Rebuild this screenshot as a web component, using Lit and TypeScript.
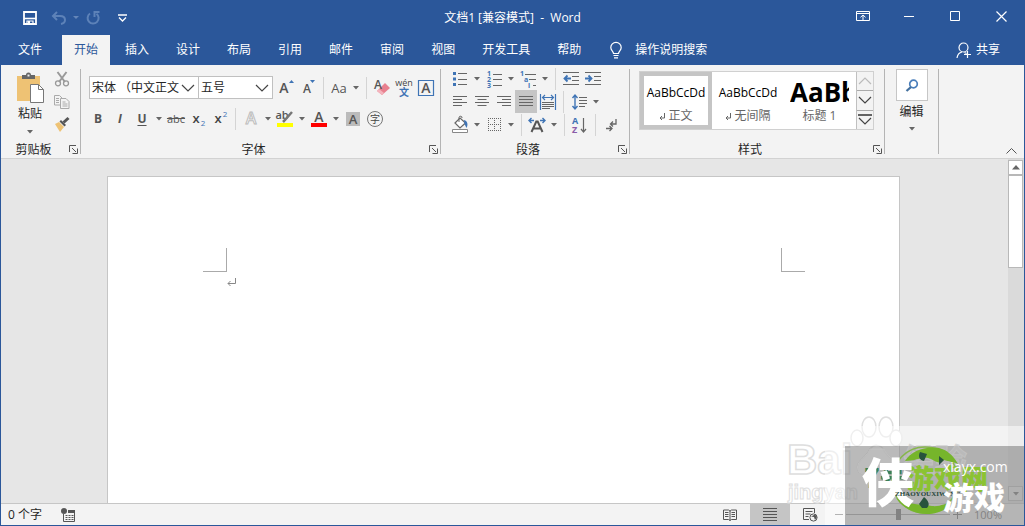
import { LitElement, html, svg, css, type TemplateResult } from "lit";
import { customElement, state } from "lit/decorators.js";
import { classMap } from "lit/directives/class-map.js";

const icon = (w: number, h: number, content: unknown) =>
  html`<svg width=${w} height=${h} viewBox="0 0 ${w} ${h}" fill="none" aria-hidden="true">${content}</svg>`;

const GREY = "#666";
const BLUE = "#3f74b5";

const caretGlyph = icon(6, 4, svg`<path d="M0 0h6L3 3.5z" fill="#666"/>`);
const chevronDown = icon(14, 8, svg`<path d="M1 1l6 6 6-6" stroke="#444" stroke-width="1.2"/>`);

const icons = {
  save: icon(14, 14, svg`<path d="M1 1h12v12H1z" stroke="#fff" stroke-width="1.8"/><path d="M1 7.500h12" stroke="#fff" stroke-width="1.6"/><path d="M4 13V10h6v3" stroke="#fff" stroke-width="1.2"/><path d="M5 10h2v3H5z" fill="#fff"/>`),
  undo: icon(16, 14, svg`<path d="M6 1L2 5l4 4M2.500 5H9c3 0 5 1.500 5 4 0 2-1.500 3.500-4 4" stroke="#5d82b8" stroke-width="2"/>`),
  redo: icon(16, 16, svg`<path d="M5 3.500a5.500 5.500 0 1 0 6.500.2" stroke="#5d82b8" stroke-width="2"/><path d="M9.500 7V2h5" stroke="#5d82b8" stroke-width="2"/>`),
  customise: icon(9, 8, svg`<path d="M0 1h9M1 3.500l3.500 3.500L8 3.500" stroke="#fff" stroke-width="1.300"/>`),
  ribbonMode: icon(14, 12, svg`<path d="M.5 1.500h13v9H.5zM.5 3.500h13M7 10V5M4.500 7.300L7 5l2.500 2.300" stroke="#fff"/>`),
  minimise: icon(10, 10, svg`<path d="M0 5.500h10" stroke="#fff"/>`),
  maximise: icon(10, 10, svg`<path d="M.5.5h9v9h-9z" stroke="#fff"/>`),
  close: icon(11, 11, svg`<path d="M.5.5l10 10M10.500.5l-10 10" stroke="#fff" stroke-width="1.200"/>`),
  bulb: icon(12, 17, svg`<path d="M3.500 11.500c0-2-2.700-3-2.700-6a5.200 5.200 0 0 1 10.400 0c0 3-2.700 4-2.700 6zM3.500 13.500h5M4 15.800h4" stroke="#fff" stroke-width="1.200"/>`),
  person: icon(16, 17, svg`<circle cx="7.500" cy="5.500" r="4.500" stroke="#fff" stroke-width="1.200"/><path d="M1 16c.5-3.500 2.500-5.500 5-6M8.500 10.500l2 1M11.500 9v7M8 12.500h7" stroke="#fff" stroke-width="1.200"/>`),
  paste: icon(29, 31, svg`<path d="M1 4h23v25H1z" fill="#eec274"/><path d="M6 3h4a2.500 2.500 0 0 1 5 0h4v4H6z" fill="#666"/><path d="M11.500 2.500h2v2h-2z" fill="#eee"/><path d="M14.500 12.500h8l5 5v13h-13z" fill="#fff" stroke="#777"/><path d="M22.500 12.500v5h5" stroke="#777"/>`),
  cut: icon(16, 16, svg`<path d="M3.500 1L11 11M12.500 1L5 11" stroke="#999" stroke-width="2"/><circle cx="4" cy="12.300" r="2.500" stroke="#999" stroke-width="1.300"/><circle cx="12" cy="12.300" r="2.500" stroke="#999" stroke-width="1.300"/>`),
  copy: icon(16, 15, svg`<path d="M.5 1.500h5l2.500 2.500v7H.5z" fill="#f3f3f3" stroke="#aaa"/><path d="M6.500 4.500h5.500l3 3v7H6.500z" fill="#f3f3f3" stroke="#aaa"/><path d="M2 4.500h3M2 6.500h3M2 8.500h3M8.500 8h3M8.500 10h5M8.500 12h5" stroke="#aaa"/>`),
  painter: icon(16, 15, svg`<path d="M1 7l4-2 5 5-4 5z" fill="#eec274"/><path d="M5.500 4.500l5 5 1.500-1.500-5-5z" fill="#555"/><path d="M9.500 5.500L14.500 1" stroke="#555" stroke-width="3"/>`),
  bullets: icon(14, 15, svg`<path d="M0 1h3v3H0zM0 6.500h3v3H0zM0 12h3v3H0z" fill="${BLUE}"/><path d="M5 2.500h9M5 8.500h9M5 13.500h9" stroke="${GREY}"/>`),
  outdent: icon(16, 13, svg`<path d="M0 .5h16M9 4.500h7M9 8.500h7M0 12.500h16" stroke="${GREY}"/><path d="M8 6.500H2M4.500 3.500l-3 3 3 3" stroke="${BLUE}" stroke-width="1.800"/>`),
  indent: icon(16, 13, svg`<path d="M0 .5h16M9 4.500h7M9 8.500h7M0 12.500h16" stroke="${GREY}"/><path d="M0 6.500h6M3.500 3.500l3 3-3 3" stroke="${BLUE}" stroke-width="1.800"/>`),
  left: icon(14, 11, svg`<path d="M0 .5h14M0 3.500h9M0 6.500h14M0 9.500h9" stroke="${GREY}"/>`),
  center: icon(14, 11, svg`<path d="M0 .5h14M2.500 3.500h9M0 6.500h14M2.500 9.500h9" stroke="${GREY}"/>`),
  right: icon(14, 11, svg`<path d="M0 .5h14M5 3.500h9M0 6.500h14M5 9.500h9" stroke="${GREY}"/>`),
  justify: icon(14, 11, svg`<path d="M0 .5h14M0 3.500h14M0 6.500h14M0 9.500h14" stroke="${GREY}"/>`),
  distribute: icon(16, 16, svg`<path d="M.5 0v16M15.500 0v16M2 3.500h12M5 1L2.500 3.500 5 6M11 1l2.500 2.500L11 6" stroke="${BLUE}" stroke-width="1.200"/><path d="M2 8.500h12M2 10.500h12M2 12.500h12M2 14.500h8" stroke="${GREY}"/>`),
  spacing: icon(15, 16, svg`<path d="M3 1v14M.5 4L3 1l2.500 3M.5 12L3 15l2.500-3" stroke="${BLUE}" stroke-width="1.400"/><path d="M7 3.500h8M7 6.500h8M7 9.500h8M7 12.500h6" stroke="${GREY}"/>`),
  shading: icon(17, 17, svg`<path d="M3 7l5-5 5.500 5L8 12z" fill="#fff" stroke="${GREY}" stroke-width="1.200"/><path d="M7 6V1.500A1.500 1.500 0 0 1 10 2" stroke="${GREY}"/><path d="M12 4c4 1 4 5 2.500 8l-2-4z" fill="${BLUE}"/><path d="M.5 13.500h15v3H.5z" fill="#fff" stroke="#888"/>`),
  borders: icon(13, 13, svg`<path d="M0 .5h13M0 6.500h13M0 12.500h13M.5 0v13M6.500 0v13M12.500 0v13" stroke="${GREY}" stroke-dasharray="1 1"/>`),
  asian: icon(18, 17, svg`<path d="M1 4.500h5M3.500 2L1 4.500 3.500 7M12 4.500h5M14.500 2L17 4.500 14.500 7" stroke="${BLUE}" stroke-width="1.400"/><path d="M3.500 16L8.300 5.500h1.400L14.500 16M5.500 12.500h7" stroke="#555" stroke-width="2"/>`),
  mark: icon(12, 14, svg`<path d="M11 1v5H6M8 3.500L5.500 6 8 8.500M1 10.500h6M4.500 8L7 10.500 4.500 13" stroke="${GREY}" stroke-width="1.300"/>`),
  search: icon(14, 13, svg`<circle cx="8.500" cy="5" r="3.800" stroke="#4a7ebb" stroke-width="1.700"/><path d="M6 8l-4.500 4" stroke="#44719f" stroke-width="2.300"/>`),
  launcher: icon(9, 9, svg`<path d="M.5 7V.5H7M3 3l4 4M8.500 3.500v5h-5" stroke="#555"/>`),
  book: icon(14, 12, svg`<path d="M7 1.500v10M.5 1h5L7 2.200 8.500 1h5v9.500h-5L7 11.500 5.500 10.500h-5z" stroke="#555"/><path d="M2 3.500h3.500M2 5.500h3.500M2 7.500h3.500M8.500 3.500H12M8.500 5.500H12M8.500 7.500H12" stroke="#555"/>`),
  printView: icon(14, 13, svg`<path d="M0 .5h14M0 3.500h14M0 6.500h14M0 9.500h14M0 12.500h14" stroke="#555"/>`),
  webView: icon(15, 14, svg`<path d="M6 11.500H.5V.5h11V5M2.500 3.500h7M2.500 6h5M2.500 8.500h3" stroke="#555"/><circle cx="10.500" cy="9.500" r="3.600" stroke="#555"/><path d="M8 8.500l3 .5 1 3 2-3-2-2.500z" fill="#555"/>`),
  macro: icon(14, 14, svg`<path d="M2.500 6v7.500h11V2.500H7" stroke="#555"/><circle cx="3" cy="3" r="3" fill="#555"/><path d="M7 2h7v3H7z" fill="#555"/><path d="M4.500 7.500h8M4.500 9.500h8M4.500 11.500h8" stroke="#555" stroke-dasharray="2 1"/>`),
  enter: icon(9, 8, svg`<path d="M8.500 0v5.500H1M3.500 3L1 5.500 3.500 8" stroke="#888"/>`),
};

@customElement("word-watermark")
class WordWatermark extends LitElement {
  static styles = css`
    :host { position: absolute; right: 0; bottom: 0; width: 240px; height: 111px; pointer-events: none; }
    .art { display: block; }
    .brand { font-family: "Liberation Sans", "Noto Sans CJK SC", sans-serif; font-weight: 700; }
    .cjk { font-family: "Noto Sans CJK SC", sans-serif; font-weight: 900; }
    .latin { font-family: "Open Sans", sans-serif; }
    .serif { font-family: "Liberation Serif", serif; }
  `;
  render() {
    return html`<svg class="art" width="240" height="111" viewBox="0 0 240 111" fill="none" aria-hidden="true">
      <g stroke="#dedede" stroke-width="1.500" fill="#fff">
        <ellipse cx="73" cy="24" rx="6" ry="8"/><ellipse cx="85" cy="13" rx="7" ry="10"/>
        <ellipse cx="102" cy="13" rx="7" ry="10"/><ellipse cx="112" cy="24" rx="6" ry="8"/>
        <path d="M75 58c-6-10 8-14 11-23 4-5 10-5 14 1 3 8 16 12 11 22-7 6-12 0-18 0s-12 5-18 0z"/>
        <text class="brand" x="3" y="60" font-size="42">Bai</text>
        <text class="brand" x="4" y="85" font-size="20" stroke-width="1">jingyan</text>
      </g>
      <path d="M41 12h199v99H41z" fill="#fff" fill-opacity=".5"/>
      <path d="M61 32h179v79H61z" fill="#000" fill-opacity=".27"/>
      <g stroke="#c9c9c9" fill="#bfbfbf" opacity=".7">
        <text class="brand" x="119" y="58" font-size="32">经验</text>
        <path d="M75 58c-6-10 8-14 11-23h14c3 8 16 13 11 23-7 6-12 0-18 0s-12 5-18 0z"/>
      </g>
      <circle cx="141" cy="66" r="33" stroke="#86b64c" stroke-width="1.500"/>
      <path d="M121 47c6-10 20-15 34-13 8 2 14 7 19 16-6-3-9-2-14-4-6 6-10-1-16-2-7-1-12 3-23 3z" fill="#76b52b"/>
      <path d="M112 84c8 6 22 6 36 8 8 1 14-3 20-4-7 11-22 14-34 11-10-3-17-7-22-15z" fill="#76b52b"/>
      <g fill="#28533d"><path d="M136 38l7 2-3 7c-5-1-6-5-4-9zM155 42l5 4-5 5zM138 94l-3-4 5-7c5 4 6 8 3 11z"/></g>
      <text class="cjk" x="80" y="74" font-size="26" fill="#3d8056">7号</text>
      <text class="cjk" x="123" y="75" font-size="27" fill="#8bc332">游戏网</text>
      <text class="cjk" x="78" y="88" font-size="52" fill="#fff">侠</text>
      <text class="serif" x="111" y="82" font-size="7" font-weight="700" fill="#28483a">ZHAOYOUXIWANG</text>
      <text class="cjk" x="159" y="95" font-size="31" fill="#fff">游戏</text>
      <text class="latin" x="159" y="58" font-size="14" fill="#fff">xiayx.com</text>
    </svg>`;
  }
}

@customElement("app-root")
class AppRoot extends LitElement {
  @state() private activeTab = "开始";
  @state() private activeStyle = "正文";

  private readonly tabs = ["开始", "插入", "设计", "布局", "引用", "邮件", "审阅", "视图", "开发工具", "帮助"];

  static styles = css`
    :host {
      position: relative; display: flex; flex-direction: column; box-sizing: border-box;
      height: 100vh; overflow: hidden; border: 1px solid #2b579a; border-top: 0;
      font: 12px/16px "Open Sans", "Noto Sans CJK SC", sans-serif; color: #262626; background: #e6e6e6;
    }
    * { box-sizing: border-box; }
    button, select, input { font: inherit; color: inherit; margin: 0; padding: 0; border: 0; background: none; border-radius: 0; }
    button { display: flex; align-items: center; justify-content: center; white-space: nowrap; }
    svg { display: block; flex: none; overflow: visible; }

    .titlebar { display: grid; grid-template-columns: 1fr auto 1fr; height: 35px; background: #2b579a; color: #fff; flex: none; }
    .quick { display: flex; align-items: center; padding-left: 17px; }
    .quick button { width: 24px; height: 24px; }
    .quick .gap { width: 5px; }
    .quick .narrow { width: 10px; opacity: .45; }
    .title { align-self: center; white-space: pre; }
    .window { display: flex; justify-content: flex-end; }
    .window button { width: 46px; height: 32px; }

    .tabs { display: flex; height: 30px; padding: 0 12px 0 5px; background: #2b579a; color: #fff; flex: none; }
    .tab { padding: 0 12px; margin-right: 3px; height: 30px; }
    .file { margin-right: 8px; }
    .tab.active { background: #f3f3f3; color: #2b579a; }
    .tell { gap: 13px; margin-left: 14px; }
    .share { gap: 4px; margin-left: auto; padding: 0 12px; }

    .ribbon { display: flex; height: 94px; background: #f3f3f3; border-bottom: 1px solid #d2d2d2; flex: none; }
    .group { display: flex; flex-direction: column; }
    .body { flex: 1; }
    .rule { width: 1px; margin: 4px 0; background: #b4b4b4; }
    .foot { display: flex; height: 17px; align-items: center; }
    .foot span { flex: 1; text-align: center; }
    .foot button { width: 14px; height: 16px; }
    .row { display: flex; align-items: center; height: 23px; }
    .vsep { width: 1px; height: 22px; margin: 0 4px; background: #d4d4d4; flex: none; }
    .tool { width: 22px; height: 23px; flex: none; }
    .caret { width: 12px; height: 22px; flex: none; }
    .selected { background: #c5c5c5; }

    .clip { display: flex; padding: 0 7px 0 13px; }
    .paste { flex-direction: column; justify-content: flex-start; width: 32px; padding-top: 7px; }
    .paste .label { margin: 3px 0 8px; }
    .stack { display: flex; flex-direction: column; padding: 2px 0 0 5px; }

    .font { padding: 11px 3px 0 6px; }
    .font .row + .row { margin-top: 8px; }
    .combo { position: relative; display: flex; height: 23px; background: #fff; border: 1px solid #c0c0c0; }
    .combo + .combo { border-left: 0; margin-right: 2px; }
    .combo select { appearance: none; width: 100%; padding: 0 0 0 2px; outline: 0; }
    .combo svg { position: absolute; right: 3px; top: 7px; pointer-events: none; }
    .face { width: 110px; margin-left: 2px; }
    .size { width: 74px; }
    .glyph { font-weight: 700; color: #555; }
    .glyph.italic { font-style: italic; }
    .glyph.under { text-decoration: underline; text-underline-offset: 2px; }
    .glyph.strike { font-weight: 400; font-size: 11px; text-decoration: line-through; }
    .plain { color: #555; font-size: 13px; }

    .para { padding: 2px 7px 0 8px; }

    .styles { padding: 6px 10px 0 9px; }
    .gallery { display: flex; height: 59px; width: 235px; background: #fff; border: 1px solid #d0d0d0; }
    .style { flex-direction: column; width: 72px; height: 57px; overflow: hidden; border: 4px solid transparent; flex: none; }
    .style.active { border-color: #c5c5c5; }
    .sample { height: 30px; line-height: 30px; color: #000; }
    .style.heading { align-items: flex-start; width: 59px; margin-left: 6px; border-width: 4px 0; }
    .heading .sample { font-size: 26px; font-weight: 700; line-height: 28px; }
    .heading .name { align-self: center; }
    .name { display: flex; align-items: center; gap: 3px; color: #666; }
    .scroll { display: flex; flex-direction: column; width: 17px; margin-left: auto; border-left: 1px solid #c0c0c0; background: #f3f3f3; }
    .scroll button { flex: 1; }
    .scroll button + button { border-top: 1px solid #aaa; }

    .edit { padding: 4px 11px 0; }
    .edit button { flex-direction: column; width: 31px; }
    .edit .frame { display: grid; place-items: center; width: 32px; height: 32px; background: #fff; border: 1px solid #c6c6c6; }
    .edit .label { margin: 3px 0 7px; }
    .collapse { margin-left: auto; align-self: flex-end; width: 26px; height: 15px; }

    .work { flex: 1; display: flex; min-height: 0; }
    .canvas { flex: 1; min-width: 0; display: flex; justify-content: center; padding: 17px 18px 0 16px; overflow: hidden; }
    .page { width: 100%; max-width: 793px; background: #fff; border: 1px solid #c6c6c6; border-bottom: 0; padding: 71px 94px 0 95px; }
    .corners { display: flex; justify-content: space-between; }
    .corner { width: 24px; height: 24px; border: 0 solid #aaa; border-bottom-width: 1px; }
    .corner.l { border-right-width: 1px; }
    .corner.r { border-left-width: 1px; }
    .cursor { padding: 6px 0 0 24px; }
    .bar { display: flex; flex-direction: column; width: 16px; padding: 1px 1px 2px 0; background: #dadada; flex: none; }
    .bar button { height: 15px; border: 1px solid #b8b8b8; background: #fff; flex: none; }
    .bar .thumb { height: 93px; background: #fff; border: 1px solid #b8b8b8; }
    .bar button:last-child { margin-top: auto; background: #e6e6e6; }

    .status { display: flex; align-items: center; height: 22px; padding: 0 0 0 7px; background: #f3f3f3; border-top: 1px solid #c6c6c6; flex: none; }
    .status .macro { margin-left: 19px; }
    .views { display: flex; margin-left: auto; }
    .views button { width: 40px; height: 21px; }
    .zoom { display: flex; align-items: center; gap: 2px; color: #666; padding: 0 22px 0 4px; }
    .zoom button { width: 10px; height: 20px; }
    .zoom input { appearance: none; width: 104px; height: 20px; background: linear-gradient(#999, #999) center / 100% 1px no-repeat; }
    .zoom input::-webkit-slider-thumb { appearance: none; width: 5px; height: 11px; background: #666; }
    .zoom output { margin-left: 10px; font-size: 11px; }
  `;

  private tool(label: string, content: TemplateResult | string, extra = "") {
    return html`<button class="tool ${extra}" aria-label=${label}>${content}</button>`;
  }

  private caret(label: string) {
    return html`<button class="caret" aria-label=${label}>${caretGlyph}</button>`;
  }

  private foot(label: string) {
    return html`<div class="foot"><span>${label}</span><button aria-label="${label}设置">${icons.launcher}</button></div>`;
  }

  /* A letter glyph with a decoration drawn around it. */
  private letter(x: number, y: number, size: number, deco: unknown, fill = "#555", text = "A") {
    return icon(20, 20, svg`${deco}<text x=${x} y=${y} text-anchor="middle" font-size=${size} font-weight="600" fill=${fill}>${text}</text>`);
  }

  private fontGroup() {
    return html`<section class="group">
      <div class="body font">
        <div class="row">
          <div class="combo face"><select aria-label="字体"><option>宋体 （中文正文</option></select>${chevronDown}</div>
          <div class="combo size"><select aria-label="字号"><option>五号</option></select>${chevronDown}</div>
          ${this.tool("增大字号", this.letter(8, 15, 14, svg`<path d="M13 5l2.500-3L18 5z" fill="${BLUE}"/>`))}
          ${this.tool("减小字号", this.letter(9, 15, 12, svg`<path d="M12 2h5l-2.500 3z" fill="${BLUE}"/>`))}
          <i class="vsep"></i>
          ${this.tool("更改大小写", "Aa", "plain")}${this.caret("大小写选项")}
          <i class="vsep"></i>
          ${this.tool("清除格式", this.letter(6, 11, 12, svg`<path d="M5 13l8-8 5 5-8 7z" fill="#e8808f"/><path d="M5 13l2-2 5 4-2 2z" fill="#f4b4bd"/>`))}
          ${this.tool("拼音指南", icon(20, 20, svg`<text x="10" y="8" text-anchor="middle" font-size="9" fill="#444">wén</text><text x="10" y="18" text-anchor="middle" font-size="10" font-weight="700" fill="${BLUE}">文</text>`))}
          ${this.tool("字符边框", this.letter(10, 15, 14, svg`<path d="M2.500 2.500h15v15h-15z" stroke="${BLUE}" stroke-width="1.200"/>`))}
        </div>
        <div class="row">
          ${this.tool("加粗", "B", "glyph")}${this.tool("倾斜", "I", "glyph italic")}
          ${this.tool("下划线", "U", "glyph under")}${this.caret("下划线选项")}
          ${this.tool("删除线", "abc", "glyph strike")}
          ${this.tool("下标", this.letter(8, 14, 13, svg`<text x="15" y="17" text-anchor="middle" font-size="8" fill="${BLUE}">2</text>`, "#444", "x"))}
          ${this.tool("上标", this.letter(8, 14, 13, svg`<text x="15" y="8" text-anchor="middle" font-size="8" fill="${BLUE}">2</text>`, "#444", "x"))}
          <i class="vsep"></i>
          ${this.tool("文本效果", icon(20, 20, svg`<text x="10" y="15" text-anchor="middle" font-size="16" font-weight="600" fill="#fff" stroke="#bbb">A</text>`))}${this.caret("文本效果选项")}
          ${this.tool("突出显示", icon(20, 20, svg`<text x="7" y="10" text-anchor="middle" font-size="11" font-weight="600" fill="#555">ab</text><path d="M17 3l-7 8-2 2" stroke="#777" stroke-width="2.500"/><path d="M2 14h16v4H2z" fill="#ff0"/>`))}${this.caret("突出显示颜色")}
          ${this.tool("字体颜色", this.letter(10, 13, 14, svg`<path d="M2 14h16v4H2z" fill="#f00"/>`))}${this.caret("字体颜色选项")}
          ${this.tool("字符底纹", this.letter(10, 15, 13, svg`<path d="M3 3h14v14H3z" fill="#bbb"/>`))}
          ${this.tool("带圈字符", icon(20, 20, svg`<circle cx="10" cy="10" r="7.500" stroke="#777"/><text x="10" y="14" text-anchor="middle" font-size="10" fill="#444">字</text>`))}
        </div>
      </div>
      ${this.foot("字体")}
    </section>`;
  }

  private paragraphGroup() {
    const numbering = icon(15, 18, svg`<g font-size="7" font-weight="700" fill="${BLUE}"><text x="0" y="6">1</text><text x="0" y="12">2</text><text x="0" y="18">3</text></g><path d="M6 4.500h9M6 9.500h9M6 15.500h9" stroke="${GREY}"/>`);
    const multilevel = icon(18, 18, svg`<g font-size="7" font-weight="700" fill="${BLUE}"><text x="1" y="6">1</text><text x="5" y="12">a</text><text x="9" y="18">i</text></g><path d="M6 4.500h11M10 9.500h7M14 15.500h3" stroke="${GREY}"/>`);
    const sort = icon(16, 18, svg`<text x="0" y="8" font-size="9" font-weight="700" fill="${BLUE}">A</text><text x="0" y="17" font-size="9" font-weight="700" fill="#8a5ca8">Z</text><path d="M11.500 2v14M9 13l2.500 3 2.500-3" stroke="${GREY}" stroke-width="1.200"/>`);
    return html`<section class="group">
      <div class="body para">
        <div class="row">
          ${this.tool("项目符号", icons.bullets)}${this.caret("项目符号库")}
          ${this.tool("编号", numbering)}${this.caret("编号库")}
          ${this.tool("多级列表", multilevel)}${this.caret("列表库")}
          <i class="vsep"></i>${this.tool("减少缩进量", icons.outdent)}${this.tool("增加缩进量", icons.indent)}
        </div>
        <div class="row">
          ${this.tool("左对齐", icons.left)}${this.tool("居中", icons.center)}${this.tool("右对齐", icons.right)}
          ${this.tool("两端对齐", icons.justify, "selected")}${this.tool("分散对齐", icons.distribute)}
          <i class="vsep"></i>${this.tool("行距", icons.spacing)}${this.caret("行距选项")}
        </div>
        <div class="row">
          ${this.tool("底纹", icons.shading)}${this.caret("底纹颜色")}
          ${this.tool("边框", icons.borders)}${this.caret("边框选项")}
          <i class="vsep"></i>${this.tool("中文版式", icons.asian)}${this.caret("版式选项")}
          <i class="vsep"></i>${this.tool("排序", sort)}
          <i class="vsep"></i>${this.tool("显示编辑标记", icons.mark)}
        </div>
      </div>
      ${this.foot("段落")}
    </section>`;
  }

  private styleItem(name: string, sample: string, marked: boolean) {
    const cls = { style: true, active: name === this.activeStyle, heading: !marked };
    return html`<button class=${classMap(cls)} @click=${() => (this.activeStyle = name)}>
      <span class="sample">${sample}</span>
      <span class="name">${marked ? icon(6, 8, svg`<path d="M5.500 1v5H1M3 4L1 6l2 2" stroke="#666"/>`) : ""}${name}</span>
    </button>`;
  }

  render() {
    return html`
      <header class="titlebar">
        <div class="quick">
          <button aria-label="保存">${icons.save}</button><i class="gap"></i>
          <button aria-label="撤消">${icons.undo}</button>
          <button class="narrow" aria-label="撤消列表">${icon(6, 4, svg`<path d="M0 0h6L3 3z" fill="#a9bfe0"/>`)}</button>
          <button aria-label="恢复">${icons.redo}</button><i class="gap"></i>
          <button aria-label="自定义快速访问工具栏">${icons.customise}</button>
        </div>
        <div class="title">文档1 [兼容模式]  -  Word</div>
        <div class="window">
          <button aria-label="功能区显示选项">${icons.ribbonMode}</button>
          <button aria-label="最小化">${icons.minimise}</button>
          <button aria-label="最大化">${icons.maximise}</button>
          <button aria-label="关闭">${icons.close}</button>
        </div>
      </header>
      <nav class="tabs">
        <button class="tab file">文件</button>
        ${this.tabs.map((t) => html`<button class=${classMap({ tab: true, active: t === this.activeTab })} @click=${() => (this.activeTab = t)}>${t}</button>`)}
        <button class="tell">${icons.bulb}<span>操作说明搜索</span></button>
        <button class="share">${icons.person}<span>共享</span></button>
      </nav>
      <div class="ribbon">
        <section class="group">
          <div class="body clip">
            <button class="paste">${icons.paste}<span class="label">粘贴</span>${caretGlyph}</button>
            <div class="stack">
              ${this.tool("剪切", icons.cut)}${this.tool("复制", icons.copy)}${this.tool("格式刷", icons.painter)}
            </div>
          </div>
          ${this.foot("剪贴板")}
        </section>
        <i class="rule"></i>
        ${this.fontGroup()}
        <i class="rule"></i>
        ${this.paragraphGroup()}
        <i class="rule"></i>
        <section class="group">
          <div class="body styles">
            <div class="gallery">
              ${this.styleItem("正文", "AaBbCcDd", true)}
              ${this.styleItem("无间隔", "AaBbCcDd", true)}
              ${this.styleItem("标题 1", "AaBb", false)}
              <div class="scroll">
                <button aria-label="上一行">${icon(14, 8, svg`<path d="M1 7l6-6 6 6" stroke="#bbb" stroke-width="1.200"/>`)}</button>
                <button aria-label="下一行">${chevronDown}</button>
                <button aria-label="其他样式">${icon(14, 12, svg`<path d="M0 1h14" stroke="#333" stroke-width="1.500"/><path d="M1 4l6 6 6-6" stroke="#444" stroke-width="1.200"/>`)}</button>
              </div>
            </div>
          </div>
          ${this.foot("样式")}
        </section>
        <i class="rule"></i>
        <section class="group">
          <div class="body edit">
            <button><span class="frame">${icons.search}</span><span class="label">编辑</span>${caretGlyph}</button>
          </div>
        </section>
        <i class="rule"></i>
        <button class="collapse" aria-label="折叠功能区">${icon(11, 6, svg`<path d="M.5 5.500l5-5 5 5" stroke="#555"/>`)}</button>
      </div>
      <main class="work">
        <div class="canvas">
          <article class="page">
            <div class="corners"><i class="corner l"></i><i class="corner r"></i></div>
            <div class="cursor">${icons.enter}</div>
          </article>
        </div>
        <div class="bar">
          <button aria-label="向上滚动">${icon(8, 5, svg`<path d="M0 4.500L4 0l4 4.500z" fill="#666"/>`)}</button>
          <div class="thumb"></div>
          <button aria-label="向下滚动">${caretGlyph}</button>
        </div>
      </main>
      <footer class="status">
        <span>0 个字</span>
        <button class="macro" aria-label="宏录制">${icons.macro}</button>
        <div class="views">
          <button aria-label="阅读视图">${icons.book}</button>
          <button class="selected" aria-label="页面视图">${icons.printView}</button>
          <button aria-label="Web 版式视图">${icons.webView}</button>
        </div>
        <div class="zoom">
          <button aria-label="缩小">${icon(8, 9, svg`<path d="M0 4.500h8" stroke="#666"/>`)}</button>
          <input type="range" min="10" max="190" value="100" aria-label="显示比例" />
          <button aria-label="放大">${icon(9, 9, svg`<path d="M0 4.500h9M4.500 0v9" stroke="#666"/>`)}</button>
          <output>100%</output>
        </div>
      </footer>
      <word-watermark></word-watermark>`;
  }
}
